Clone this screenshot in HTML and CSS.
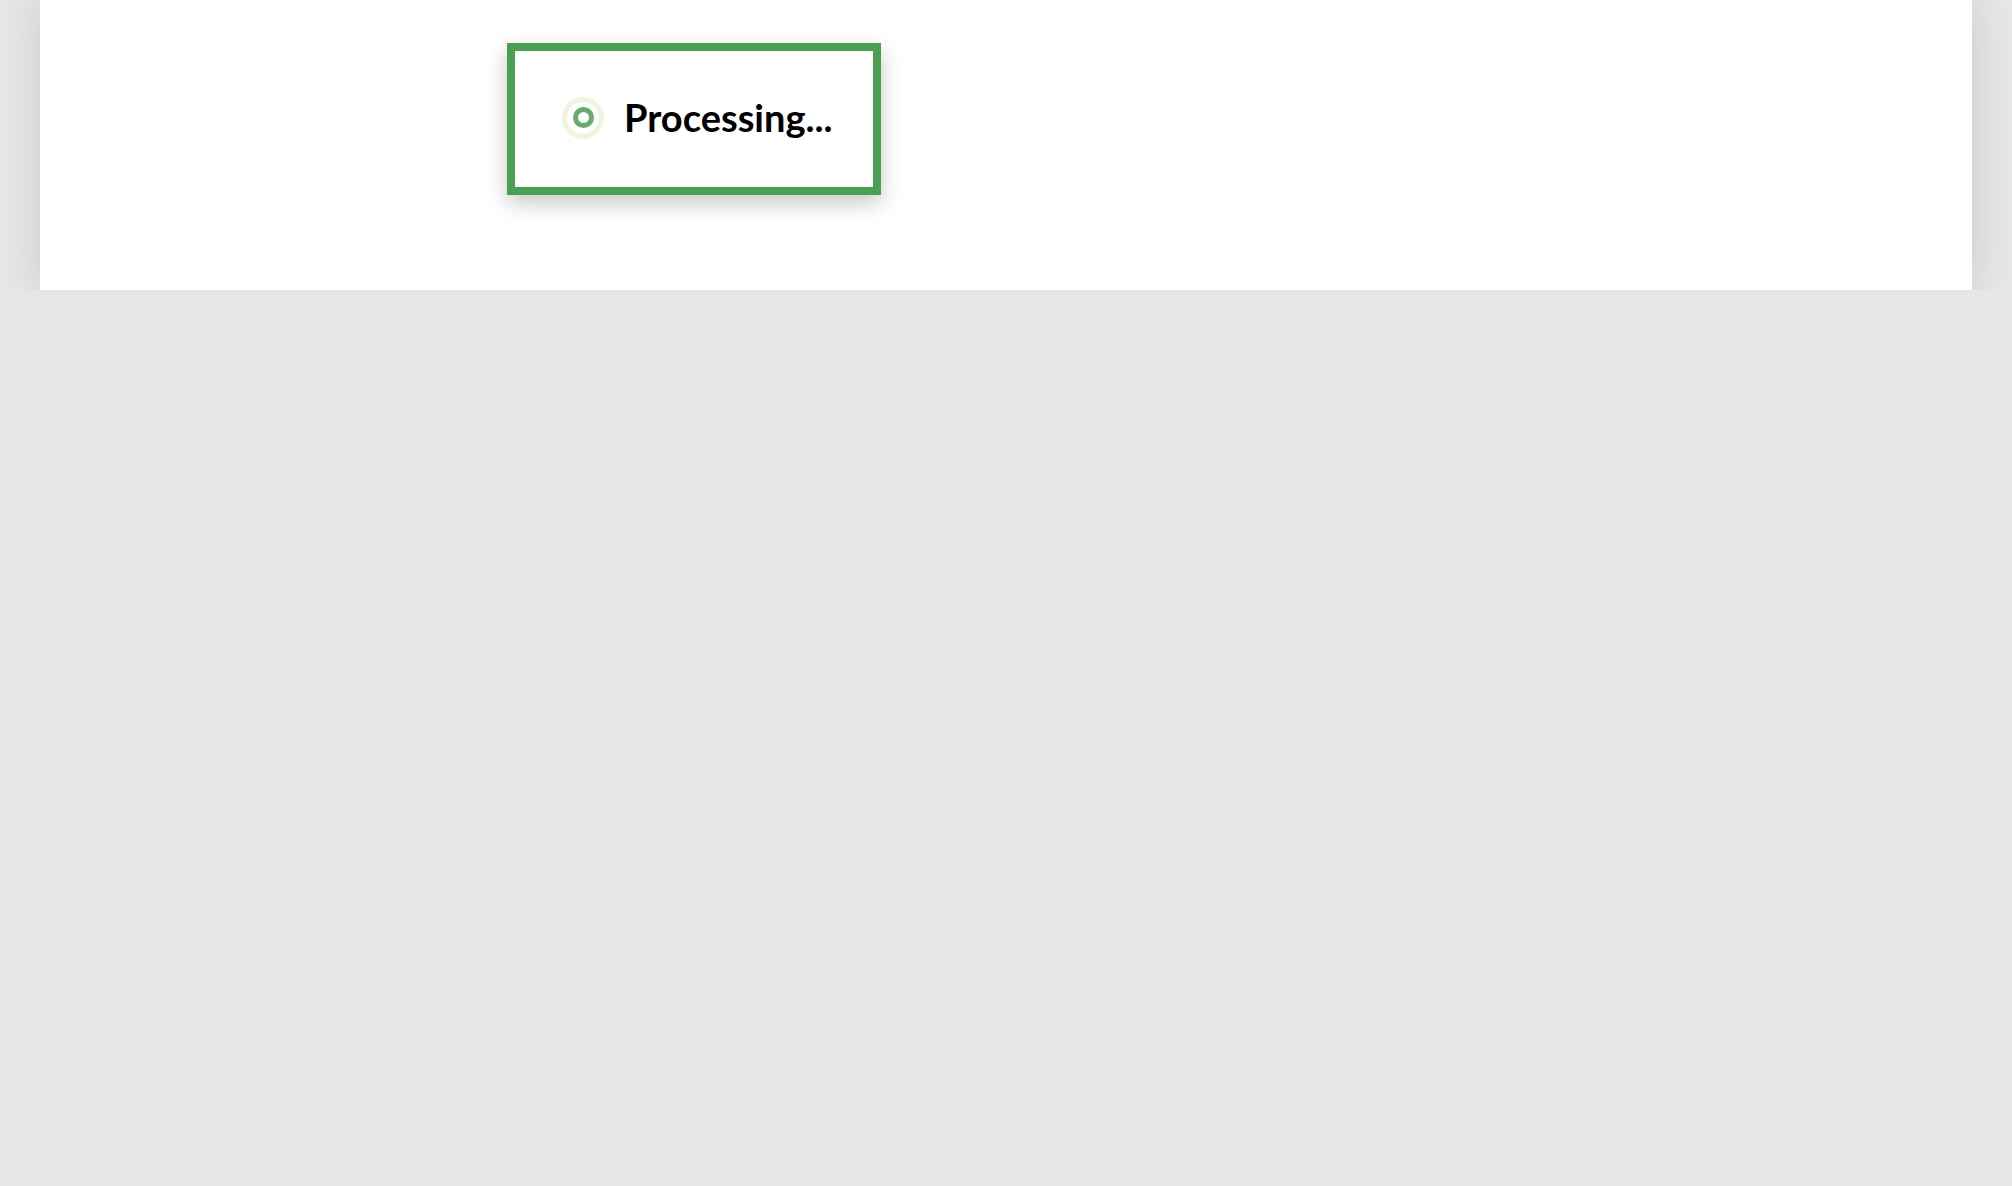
FILE: index.html
```html
<!DOCTYPE html>
<html>
<head>
<meta charset="utf-8">
<link rel="stylesheet" href="styles.css">
</head>
<body>
<div class="frame">
  <div class="panel">
    <div class="toast">
      <span class="spinner"><span class="dot"></span></span>
      <span class="label">Processing...</span>
    </div>
  </div>
</div>
</body>
</html>
```
FILE: styles.css
```css
html, body {
  margin: 0;
  padding: 0;
  background: #e5e6e8;
  height: 100%;
}
.frame {
  height: 290px;
  overflow: hidden;
  padding: 0 40px;
}
.panel {
  background: #fff;
  height: 290px;
  box-shadow: 0 0 40px rgba(0, 0, 0, 0.12);
  padding: 43px 0 0 467px;
  box-sizing: border-box;
}
.toast {
  display: inline-flex;
  align-items: center;
  box-sizing: border-box;
  width: 374px;
  height: 152px;
  border: 8px solid #4aa052;
  background: #fff;
  padding: 0 0 5px 47px;
  box-shadow: 0 8px 20px rgba(0, 0, 0, 0.22);
}
.spinner {
  width: 42px;
  height: 42px;
  box-sizing: border-box;
  border: 5px solid #eef5dd;
  border-radius: 50%;
  display: flex;
  align-items: center;
  justify-content: center;
  margin-right: 20px;
  margin-top: 2px;
}
.dot {
  width: 21px;
  height: 21px;
  box-sizing: border-box;
  border: 5px solid #64ad6a;
  border-radius: 50%;
}
.label {
  font-family: "Lato", "DejaVu Sans", sans-serif;
  font-weight: 700;
  font-size: 38px;
  color: #000;
  letter-spacing: 0;
}
```
